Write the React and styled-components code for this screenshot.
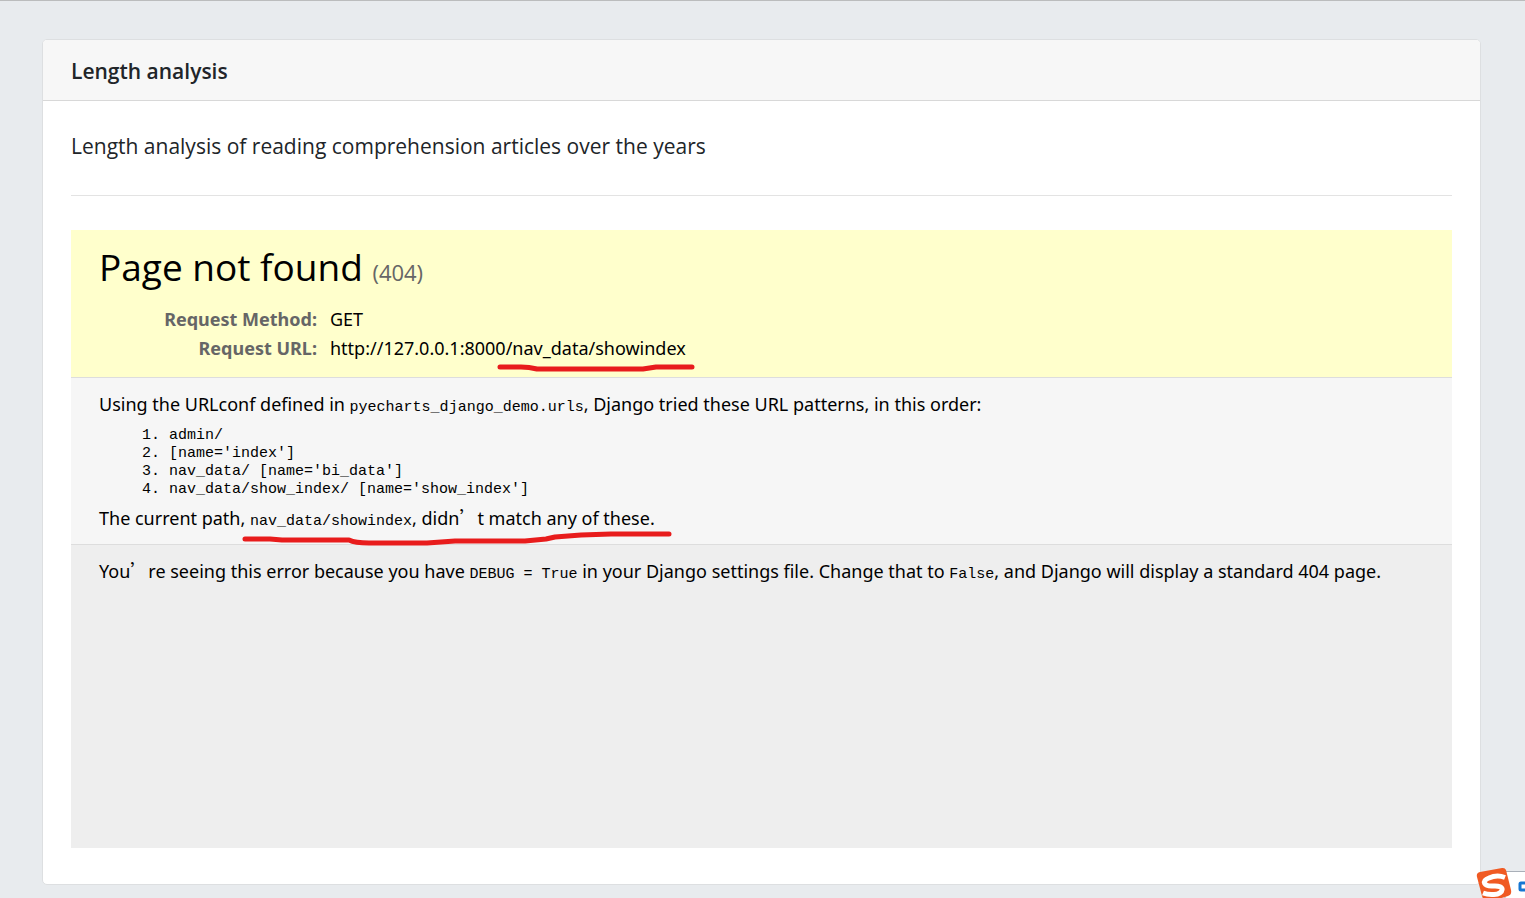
import React from 'react';
import styled, { createGlobalStyle } from 'styled-components';

const GlobalStyle = createGlobalStyle`
  * {
    box-sizing: border-box;
  }

  body {
    margin: 0;
    background-color: #e8ebee;
    color: #212529;
    font-family: 'Open Sans', 'Noto Sans', sans-serif;
    overflow: hidden;
  }
`;

const Page = styled.main`
  border-top: 1px solid #bbbcbd;
  padding: 38px 44px 13px 42px;
`;

const Card = styled.section`
  background-color: #fff;
  border: 1px solid #dddfe1;
  border-radius: 5px;
`;

const CardHeader = styled.header`
  background-color: #f7f7f7;
  border-bottom: 1px solid #d8d8d8;
  border-radius: 4px 4px 0 0;
  padding: 17px 28px 15px;
`;

const CardTitle = styled.h1`
  margin: 0;
  font-size: 21px;
  font-weight: 600;
  line-height: 28px;
`;

const CardBody = styled.div`
  padding: 28px 28px 36px;
`;

const Lead = styled.p`
  margin: 0;
  padding-bottom: 32px;
  border-bottom: 1px solid #e3e3e3;
  font-size: 21px;
  line-height: 34px;
`;

const Frame = styled.article`
  position: relative;
  display: flex;
  flex-direction: column;
  min-height: 618px;
  margin-top: 34px;
  background-color: #eee;
  color: #000;
  font-family: 'Noto Sans', sans-serif;
  font-size: 18px;
  line-height: 28px;
`;

const Summary = styled.div`
  padding: 11px 28px 14px;
  background-color: #ffc;
  border-bottom: 1px solid #ddd;
`;

const ErrorTitle = styled.h2`
  margin: 0 0 12px;
  font-family: 'Open Sans', sans-serif;
  font-size: 37px;
  font-weight: 400;
  line-height: 52px;
`;

const ErrorCode = styled.small`
  color: #666;
  font-size: 22px;
  line-height: 1;
`;

const Meta = styled.table`
  border-collapse: collapse;
  line-height: 29px;

  th {
    width: 218px;
    padding: 0;
    color: #666;
    font-weight: 700;
    text-align: right;
  }

  td {
    padding: 0 0 0 13px;
  }
`;

const Info = styled.div`
  padding: 12px 28px;
  background-color: #f6f6f6;
  border-bottom: 1px solid #ddd;
`;

const Explanation = styled.div`
  padding: 12px 28px;
`;

const Text = styled.p`
  margin: 0;
`;

const Code = styled.code`
  font-family: 'Liberation Mono', monospace;
  font-size: 15px;
  line-height: 1;
`;

const Patterns = styled.ol`
  margin: 9px 0 5px;
  padding-left: 70px;
  font-family: 'Liberation Mono', monospace;
  font-size: 15px;
  line-height: 18px;
`;

const WideQuote = styled.span`
  font-family: 'Noto Sans CJK SC', sans-serif;
  line-height: 1;
`;

const Strokes = styled.svg`
  position: absolute;
  top: 0;
  left: 0;
  width: 640px;
  height: 340px;
  pointer-events: none;
`;

const InputMethodBar = styled.aside`
  position: fixed;
  right: 0;
  bottom: 0;
  width: 50px;
  height: 32px;
`;

const patterns = [
  'admin/',
  "[name='index']",
  "nav_data/ [name='bi_data']",
  "nav_data/show_index/ [name='show_index']",
];

const RedStrokes = () => (
  <Strokes viewBox="0 0 640 340" fill="none" stroke="#e81c1c" strokeWidth="5" strokeLinecap="round" strokeLinejoin="round" aria-hidden="true">
    <path d="M429 137 L450 137 Q458 137 466 139 L572 139 L585 137 L621 137" />
    <path d="M174 309 L199 309 L211 310 L278 310 Q284 313 298 313 L356 313 L384 311 L454 311 L475 309 L484 307 L510 305 L540 304 L598 304" />
  </Strokes>
);

const SogouBar = () => (
  <InputMethodBar aria-label="Input method">
    <svg width="50" height="32" viewBox="0 0 50 32">
      <path d="M30 5.5H51V33H30Z" fill="#fff" stroke="#a9afb8" />
      <path d="M5 6 L27 2 Q30 1.500 31 4 L36 24 Q37 29 33 30 L20 34 H9 Q8 33 7 30 L2 11 Q1 7 5 6Z" fill="#f05a23" />
      <path d="M30 11.500 Q22 8.500 14 12 C6 15 9 20.500 18 20 C31 19 29 28 19 28.500 Q13 29 8 27" fill="none" stroke="#fff" strokeWidth="5" />
      <path d="M52 17H46Q45 17 45 18V23Q45 24 46 24H52" fill="none" stroke="#1676d2" strokeWidth="3" />
    </svg>
  </InputMethodBar>
);

const App = () => {
  return (
    <>
      <GlobalStyle />
      <Page>
        <Card>
          <CardHeader>
            <CardTitle>Length analysis</CardTitle>
          </CardHeader>
          <CardBody>
            <Lead>Length analysis of reading comprehension articles over the years</Lead>
            <Frame>
              <Summary>
                <ErrorTitle>
                  Page not found <ErrorCode>(404)</ErrorCode>
                </ErrorTitle>
                <Meta>
                  <tbody>
                    <tr>
                      <th scope="row">Request Method:</th>
                      <td>GET</td>
                    </tr>
                    <tr>
                      <th scope="row">Request URL:</th>
                      <td>http://127.0.0.1:8000/nav_data/showindex</td>
                    </tr>
                  </tbody>
                </Meta>
              </Summary>
              <Info>
                <Text>
                  Using the URLconf defined in <Code>pyecharts_django_demo.urls</Code>, Django tried these URL patterns, in this order:
                </Text>
                <Patterns>
                  {patterns.map((pattern) => (
                    <li key={pattern}>{pattern}</li>
                  ))}
                </Patterns>
                <Text>
                  The current path, <Code>nav_data/showindex</Code>, didn<WideQuote>’</WideQuote>t match any of these.
                </Text>
              </Info>
              <Explanation>
                <Text>
                  You<WideQuote>’</WideQuote>re seeing this error because you have <Code>DEBUG = True</Code> in your Django settings file. Change that to <Code>False</Code>, and Django will display a standard 404 page.
                </Text>
              </Explanation>
              <RedStrokes />
            </Frame>
          </CardBody>
        </Card>
      </Page>
      <SogouBar />
    </>
  );
};

export default App;
